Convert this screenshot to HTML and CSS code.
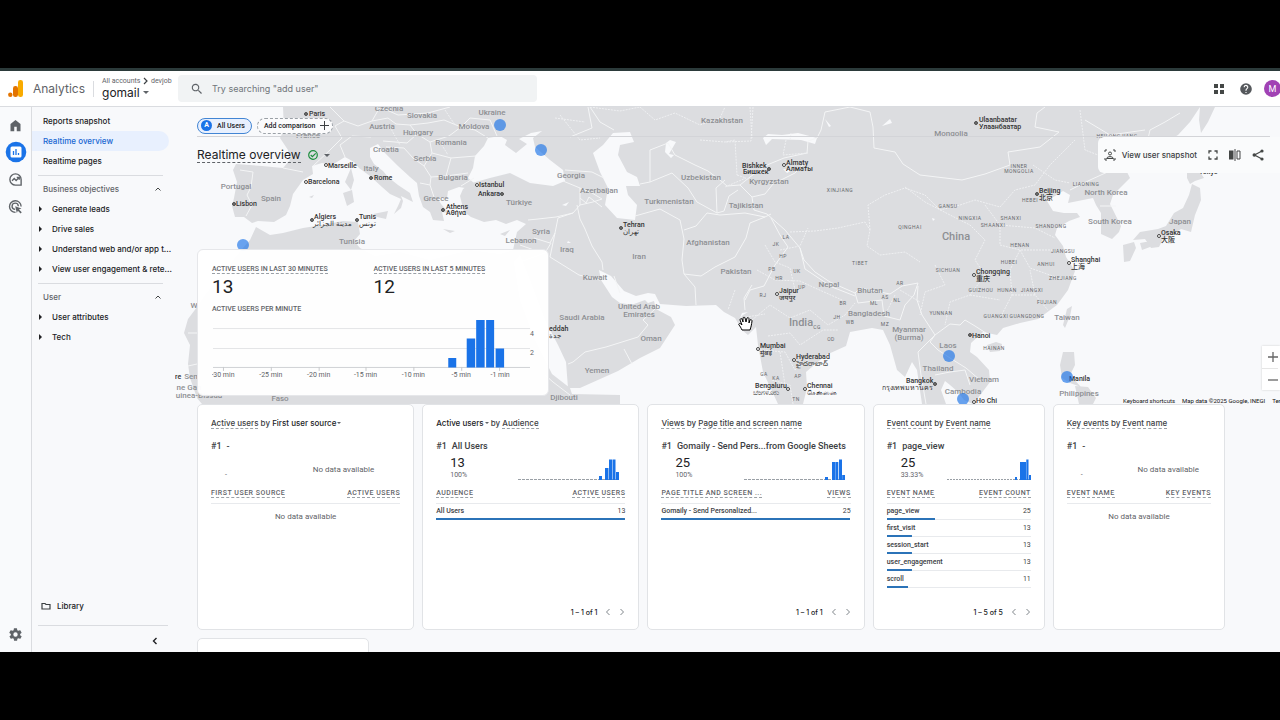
FILE: index.html
```html
<!DOCTYPE html>
<html lang="en">
<head>
<meta charset="utf-8">
<title>Analytics | Realtime overview</title>
<link rel="stylesheet" href="styles.css">
</head>
<body>
<div class="app">
  <header class="topbar">
    <svg class="logo" viewBox="0 0 16 18" width="16" height="18"><rect x="10" y="0" width="5" height="17" rx="2.3" fill="#f9ab00"/><rect x="5" y="6" width="5" height="11" rx="2.3" fill="#e37400"/><circle cx="2.3" cy="14.8" r="2.2" fill="#e37400"/></svg>
    <span class="brand">Analytics</span>
    <div class="account">
      <span class="crumbs">All accounts <svg viewBox="0 0 5 8" width="5" height="8"><path d="M1 1l3 3-3 3" fill="none" stroke="#3c4043" stroke-width="1.2"/></svg> devjob</span>
      <button class="property">gomail <i class="caret"></i></button>
    </div>
    <label class="search">
      <svg viewBox="0 0 24 24" width="14" height="14"><path fill="#5f6368" d="M15.5 14h-.8l-.3-.3A6.500 6.500 0 1 0 13.700 14.400l.3.300v.8l5 5 1.500-1.500zm-6 0A4.500 4.500 0 1 1 9.500 5a4.500 4.500 0 0 1 0 9z"/></svg>
      <input type="search" aria-label="Search" placeholder="Try searching &quot;add user&quot;">
    </label>
    <div class="tools">
      <button class="apps" aria-label="Apps"><svg viewBox="0 0 12 12" width="12" height="12" fill="#444746"><rect x="1" y="1" width="4" height="4"/><rect x="7" y="1" width="4" height="4"/><rect x="1" y="7" width="4" height="4"/><rect x="7" y="7" width="4" height="4"/></svg></button>
      <button aria-label="Help"><svg viewBox="0 0 24 24" width="14" height="14"><path fill="#55585c" d="M12 2a10 10 0 1 0 0 20 10 10 0 0 0 0-20zm1 17h-2v-2h2zm2.100-7.700l-.9.900c-.8.700-1.200 1.300-1.200 2.800h-2v-.5c0-1.100.4-2.100 1.200-2.800l1.200-1.300A2 2 0 1 0 10 9H8a4 4 0 1 1 7.100 2.300z"/></svg></button>
      <button class="avatar" aria-label="Account">M</button>
    </div>
  </header>

  <div class="body">
    <div class="rail">
      <a href="#" aria-label="Home"><svg viewBox="0 0 24 24" width="15" height="15"><path fill="#5f6368" d="M4 21V9.500L12 3l8 6.500V21h-6v-7h-4v7z"/></svg></a>
      <a href="#" aria-label="Reports"><svg viewBox="0 0 22 22" width="22" height="22"><circle cx="11" cy="11" r="10.300" fill="#1a73e8"/><rect x="5.500" y="5.500" width="11" height="11" rx="1.500" fill="#fff"/><path d="M8.500 10v4M11 8v6M13.500 12v2" stroke="#1a73e8" stroke-width="1.300"/></svg></a>
      <a href="#" aria-label="Explore"><svg viewBox="0 0 24 24" width="15" height="15" fill="none" stroke="#5f6368" stroke-width="2.200"><path d="M21 12a9 9 0 1 0-9 9h9z"/><path d="M6.500 14l3.500-3.500 3 3 5-5M14 8.500h4v4"/></svg></a>
      <a href="#" aria-label="Advertising"><svg viewBox="0 0 24 24" width="15" height="15" fill="none" stroke="#5f6368" stroke-width="2.200"><path d="M21 12a9.300 9.300 0 1 0-9 9.300"/><path d="M16.500 11.500a5 5 0 1 0-5 5"/><path d="M11.500 11.500l10 3.500-4 1.800 4.500 4.500-1.800 1.800-4.500-4.500-1.600 3.600z" fill="#5f6368" stroke="none"/></svg></a>
      <a href="#" class="gear" aria-label="Admin"><svg viewBox="0 0 24 24" width="15" height="15"><path fill="#5f6368" d="M19.400 13a7.500 7.500 0 0 0 0-2l2.100-1.600c.2-.2.200-.4.100-.6l-2-3.500c-.1-.2-.4-.3-.6-.2l-2.500 1a7 7 0 0 0-1.700-1l-.4-2.600a.5.5 0 0 0-.5-.5h-4c-.2 0-.4.200-.5.400l-.4 2.700a7 7 0 0 0-1.700 1l-2.500-1c-.2-.1-.5 0-.6.200l-2 3.500c-.1.200 0 .5.100.6L4.600 11a7.500 7.500 0 0 0 0 2l-2.100 1.600c-.2.200-.2.400-.1.600l2 3.500c.1.200.4.300.6.200l2.500-1a7 7 0 0 0 1.700 1l.4 2.600c.1.300.3.500.5.500h4c.2 0 .4-.2.500-.4l.4-2.700a7 7 0 0 0 1.700-1l2.500 1c.2.100.5 0 .6-.2l2-3.500c.1-.2.100-.5-.1-.6zM12 15.500a3.500 3.500 0 1 1 0-7 3.500 3.500 0 0 1 0 7z"/></svg></a>
    </div>

    <nav class="nav">
      <a href="#" class="item">Reports snapshot</a>
      <a href="#" class="item current">Realtime overview</a>
      <a href="#" class="item">Realtime pages</a>
      <hr>
      <button class="group">Business objectives <svg viewBox="0 0 8 6" width="8" height="6"><path d="M1.500 4.500L4 2l2.500 2.500" fill="none" stroke="#444746"/></svg></button>
      <a href="#" class="item sub">Generate leads</a>
      <a href="#" class="item sub">Drive sales</a>
      <a href="#" class="item sub">Understand web and/or app t...</a>
      <a href="#" class="item sub">View user engagement &amp; rete...</a>
      <hr>
      <button class="group">User <svg viewBox="0 0 8 6" width="8" height="6"><path d="M1.500 4.500L4 2l2.500 2.500" fill="none" stroke="#444746"/></svg></button>
      <a href="#" class="item sub">User attributes</a>
      <a href="#" class="item sub">Tech</a>
      <a href="#" class="library"><svg viewBox="0 0 10 8" width="10" height="8"><path d="M1 1.500h3l1 1h4v4.500H1z" fill="none" stroke="#3c4043" stroke-width="1.200"/></svg>Library</a>
      <hr class="wide">
      <button class="collapse" aria-label="Collapse navigation"><svg viewBox="0 0 8 8" width="8" height="8"><path d="M5.500 1L2.500 4l3 3" fill="none" stroke="#202124" stroke-width="1.400"/></svg></button>
    </nav>

    <main class="main">
      <section class="hero">
        <svg class="map" viewBox="175 107 1105 297" preserveAspectRatio="xMinYMin slice" role="img" aria-label="Map of active users">
          <g class="land">
            <path d="M283 107L284 130 280 138 288 150 290 160 283 168 262 166 236 164 233 170 237 182 234 198 232 206 235 217 244 217 252 223 258 221 274 222 286 215 290 206 293 194 303 180 313 174 312 166 322 163 332 165 345 157 354 162 359 168 370 176 382 187 390 194 401 199 398 206 394 214 401 208 403 201 401 196 413 202 410 193 398 185 388 177 383 171 374 164 370 157 370 148 378 144 384 152 398 166 410 177 417 183 419 196 423 207 430 212 433 220 444 221 442 212 449 213 441 204 437 197 447 198 448 191 459 187 471 189 474 183 468 178 473 168 475 156 484 146 488 138 500 136 507 140 505 145 516 153 527 144 519 139 531 133 542 131 533 138 535 147 550 160 563 170 565 181 553 186 530 183 510 173 490 178 472 183 463 189 460 196 464 212 471 217 484 222 496 220 506 224 517 220 526 224 517 232 513 250 500 254 470 250 430 260 400 252 375 256 360 248 354 241 360 234 358 222 343 221 322 225 303 228 283 233 270 235 256 227 250 240 243 248 225 270 205 295 197 307 188 319 184 333 190 345 188 364 190 378 197 398 202 404H620V395L572 394 570 388 552 374 535 340 520 300 514 262 520 255 528 275 545 320 558 345 566 362 568 388 580 388 618 371 640 358 660 348 675 325 671 317 656 309 654 301 648 303 645 300 634 304 627 304 620 303 612 297 601 280 599 270 611 276 624 291 636 296 648 293 655 294 660 304 686 306 716 305 724 312 735 318 742 330 748 335 756 327 758 345 763 372 772 391 778 404H803L807 388 806 372 826 355 846 346 850 332 872 328 883 330 890 345 897 370 905 377 912 362 917 370 922 404H946L941 390 945 381 950 385 958 392 964 400 973 404 978 398 990 382 989 370 977 357 970 352 971 343 983 332 997 335 1003 328 1020 323 1038 319 1057 305 1068 290 1075 271 1066 257 1063 246 1055 235 1057 228 1069 221 1080 217 1077 213 1064 213 1053 211 1047 201 1055 196 1063 191 1070 195 1068 203 1093 198 1096 205 1101 213 1101 234 1112 239 1119 232 1121 226 1114 212 1110 204 1113 195 1130 178 1127 172 1138 155 1160 145 1178 135 1190 122 1200 107Z"/>
            <path d="M1200 107H1215L1208 122 1201 133 1199 120ZM1187 172L1200 172 1204 178 1195 181 1190 184 1187 178ZM1192 184L1200 188 1201 200 1195 215 1191 232 1181 229 1173 234 1163 239 1159 247 1151 248 1145 239 1133 240 1140 232 1158 229 1166 226 1174 213 1183 208 1189 195ZM1123 245L1134 242 1136 248 1130 261 1124 262ZM1140 243L1151 241 1150 247 1142 250ZM1063 325L1067 309 1072 306 1070 316 1065 328ZM987 345L996 342 1002 344 1000 351 990 352ZM1063 352L1074 352 1075 365 1070 375 1081 387 1070 383 1062 378 1060 365ZM1075 386L1088 387 1096 398 1093 404H1079ZM345 182L351 168 354 180 351 190ZM343 193L352 190 354 202 347 206ZM373 214L388 211 386 219 377 217ZM443 229L455 231 450 233ZM500 234L510 230 505 236ZM309 197L314 195 312 198Z"/>
          </g>
          <g class="water">
            <path d="M613 133L630 132 634 142 620 145 618 155 627 172 637 177 640 186 626 186 628 195 637 205 635 220 617 218 605 205 608 188 600 172 593 153 603 145ZM666 143L670 140 676 142 669 154 674 155 671 158 665 152ZM763 138L768 134 782 135 798 133 817 138 815 144 801 140 772 139 766 145ZM783 169L792 170 787 173ZM825 119L831 126 829 127ZM562 205L569 202 566 206ZM568 241L571 243 567 243ZM882 126L890 119 892 123ZM932 218L935 219 933 221Z"/>
            <path d="M742 313L748 312 743 315 740 318Z"/>
          </g>
          <g class="borders">
            <path d="M283 168L303 172M240 170L253 172 251 187 247 195 252 205 246 216M313 166L330 150 342 138 335 126 344 121 330 107M345 157L340 145 352 136 371 137M344 121L358 126 372 121 380 107M372 121L388 118 396 124 410 125 417 134 407 143 383 141M410 125L428 123 444 120 461 127 449 136 430 142 417 134M380 107L398 115 428 113 450 107M461 127L475 130 488 138M461 127L470 118 490 120 497 136M430 142L432 153 451 158 476 156M432 153L424 166 413 158 404 148 386 147M424 166L431 177 446 176 451 158M431 177L430 185 420 183M446 176L468 173M430 185L434 197M461 186L474 178M563 181L580 188 580 205 573 213 556 217 538 219 528 220M565 170L592 172 604 178M580 188L592 193 602 199 593 202 580 205M580 198L586 203 589 197 602 207M573 213L558 218 555 233 550 243 534 238M555 233L550 257 579 275 600 280M534 250L520 245M577 205L580 219 585 229 592 246 602 262 603 270M551 243L545 253 520 262M614 276L620 293M655 309L643 320 648 325 638 337 606 347 585 352 573 362 568 364M624 349L632 364"/>
            <path d="M635 216L660 209 680 220 684 239 682 260 684 274 695 287 696 305M684 230L696 226 707 213 720 215 745 213 765 217 771 214M684 274L701 276 715 267 735 257 746 238 750 223 765 217M590 107L600 122 614 130M650 182L650 150 668 143 675 155 695 165 708 171 720 180 727 186 740 185M640 184L650 182 672 173 688 188 697 202 717 213 724 211 729 196 738 190M717 213L716 188 725 180M740 185L750 177 767 165 784 158 807 153 808 141 817 138 821 130 825 112 850 107M740 185L752 197 765 194 773 184 795 173 804 164M752 197L754 210 767 214 785 230 800 248 804 260 815 272 830 282 855 293 860 288 890 294 902 286 918 283 914 295 905 305 900 320 884 316 882 300 858 303 855 293M745 300L750 290 764 286 775 265 788 247 780 235 771 218M800 248L805 269 832 287 855 296M850 107L870 112 873 127 874 148 895 152 903 164 920 175 962 180 985 174 1010 165 1008 152 1040 147 1059 132 1035 127 1037 113 1045 107M745 310L744 298 752 285M918 286L917 300 922 315 935 335 950 324 960 325 965 320 975 326 989 335M935 335L930 342 938 350 950 358 966 368 980 380M935 335L918 352 921 375 926 404M935 375L950 372 965 370 970 385M1100 206L1116 206M1070 190L1090 180 1112 170M1145 152L1150 130 1165 122 1180 113M1085 120L1110 135 1145 130M588 107L592 128 570 137M188 333L197 333M188 366L197 364M545 375L553 382 570 395"/>
          </g>
          <g class="borders dotted">
            <path d="M590 107L620 111 640 107M700 140L725 142 735 140 737 175M753 107L751 141 725 142M555 118L585 122M750 107L752 138M786 140L783 155 808 153M790 140L791 133M737 175L746 178 725 187M870 230L868 205 885 195 905 188 925 195 940 210 960 205 975 200 1000 207M790 232L815 231 838 228 865 222 870 230 867 246 880 255 905 252 920 262M765 245L775 262 790 268 795 290M780 250L800 246 808 228M757 270L775 280 800 281 815 288 842 300M752 320L770 305 790 318 810 310 828 325 845 315 855 303M768 336L790 333 800 345 823 330 838 330M760 350L785 352 795 370 810 358M772 380L790 385 793 404M780 352L785 385M905 187L925 202 950 215 970 225 985 240 975 260 985 275 1010 270 1020 250 1055 250M985 205L1000 225 1000 245 1020 250M1000 225L1035 228 1055 238M1020 250L1030 268 1050 275 1065 280M1010 270L1012 295 1000 318M1012 295L1035 295 1048 310M1035 295L1030 270M985 275L970 295 950 302 945 325M970 295L1000 300M935 265L945 285 925 292 920 315M1033 165L1055 180 1070 183M1080 110L1085 150 1098 155M1000 207L1015 190 1035 185 1050 165 1075 140M440 142L448 155M445 110L455 125M390 127L400 145M560 115L580 140 600 138M640 107L655 120 675 113 700 125 720 118 725 107M735 290L728 310M740 318L765 314M895 295L885 315M900 290L920 302"/>
          </g>
          <g class="country">
            <text x="389" y="111">Czechia</text><text x="422" y="118">Slovakia</text><text x="492" y="115">Ukraine</text><text x="382" y="129">Austria</text><text x="418" y="135">Hungary</text><text x="474" y="129">Moldova</text><text x="451" y="145">Romania</text><text x="308" y="138">France</text><text x="386" y="152">Croatia</text><text x="425" y="161">Serbia</text><text x="371" y="171">Italy</text><text x="453" y="180">Bulgaria</text><text x="236" y="189">Portugal</text><text x="271" y="201">Spain</text><text x="436" y="201">Greece</text><text x="519" y="205">Türkiye</text><text x="352" y="244">Tunisia</text><text x="541" y="234">Syria</text><text x="521" y="243">Lebanon</text><text x="567" y="252">Iraq</text><text x="571" y="178">Georgia</text><text x="599" y="193">Azerbaijan</text><text x="639" y="259">Iran</text><text x="595" y="280">Kuwait</text><text x="582" y="320">Saudi Arabia</text><text x="639" y="309">United Arab</text><text x="639" y="317">Emirates</text><text x="651" y="341">Oman</text><text x="597" y="373">Yemen</text><text x="564" y="400">Djibouti</text><text x="722" y="123">Kazakhstan</text><text x="701" y="180">Uzbekistan</text><text x="669" y="204">Turkmenistan</text><text x="769" y="184">Kyrgyzstan</text><text x="746" y="208">Tajikistan</text><text x="708" y="245">Afghanistan</text><text x="736" y="274">Pakistan</text><text x="829" y="287">Nepal</text><text x="870" y="293">Bhutan</text><text x="869" y="316">Bangladesh</text><text x="909" y="332">Myanmar</text><text x="909" y="340">(Burma)</text><text x="951" y="136">Mongolia</text><text x="1106" y="195">North Korea</text><text x="1110" y="224">South Korea</text><text x="1180" y="224">Japan</text><text x="1067" y="320">Taiwan</text><text x="948" y="348">Laos</text><text x="938" y="371">Thailand</text><text x="984" y="382">Vietnam</text><text x="963" y="394">Cambodia</text><text x="1079" y="396">Philippines</text><text x="191" y="379">Sen</text><text x="189" y="390">ne Gan</text><text x="199" y="398">uinea-Bissau</text><text x="280" y="401">Faso</text><text x="194" y="308">W</text>
          </g>
          <g class="country large"><text x="801" y="326">India</text><text x="956" y="240">China</text></g>
          <g class="region">
            <text x="840" y="192">XINJIANG</text><text x="910" y="229">QINGHAI</text><text x="860" y="265">TIBET</text><text x="1019" y="168">INNER</text><text x="1019" y="173">MONGOLIA</text><text x="948" y="208">GANSU</text><text x="970" y="220">NINGXIA</text><text x="1011" y="220">SHANXI</text><text x="993" y="227">SHAANXI</text><text x="1030" y="202">HEBEI</text><text x="1051" y="228">SHANDONG</text><text x="1086" y="186">LIAONING</text><text x="1020" y="247">HENAN</text><text x="1063" y="253">JIANGSU</text><text x="1009" y="264">HUBEI</text><text x="1046" y="266">ANHUI</text><text x="948" y="272">SICHUAN</text><text x="1063" y="280">ZHEJIANG</text><text x="981" y="292">GUIZHOU</text><text x="1007" y="292">HUNAN</text><text x="1032" y="292">JIANGXI</text><text x="1047" y="304">FUJIAN</text><text x="941" y="315">YUNNAN</text><text x="996" y="318">GUANGXI</text><text x="1027" y="318">GUANGDONG</text><text x="994" y="350">HAINAN</text><text x="1117" y="138">HEILONGJIANG</text><text x="786" y="239">LA</text><text x="776" y="246">JK</text><text x="783" y="258">HP</text><text x="772" y="271">PB</text><text x="797" y="273">UK</text><text x="779" y="280">HR</text><text x="802" y="289">UP</text><text x="763" y="297">RJ</text><text x="843" y="305">BR</text><text x="874" y="305">ML</text><text x="885" y="299">AS</text><text x="897" y="302">NL</text><text x="900" y="285">AR</text><text x="837" y="319">JH</text><text x="850" y="324">WB</text><text x="885" y="326">MZ</text><text x="817" y="329">CG</text><text x="831" y="341">OD</text><text x="764" y="376">GA</text><text x="776" y="380">KA</text><text x="798" y="378">AP</text><text x="796" y="401">TN</text>
          </g>
          <g class="city">
            <text x="309" y="116">Paris</text><text x="328" y="168">Marseille</text><text x="308" y="184">Barcelona</text><text x="374" y="180">Rome</text><text x="236" y="206">Lisbon</text><text x="314" y="219">Algiers</text><text x="313" y="226">مدينة الجزائر</text><text x="359" y="219">Tunis</text><text x="359" y="226">تونس</text><text x="479" y="187">Istanbul</text><text x="478" y="196">Ankara</text><text x="446" y="209">Athens</text><text x="446" y="215">Αθήνα</text><text x="623" y="227">Tehran</text><text x="623" y="234">تهران</text><text x="742" y="168">Bishkek</text><text x="743" y="174">Бишкек</text><text x="786" y="165">Almaty</text><text x="786" y="171">Алматы</text><text x="979" y="122">Ulaanbaatar</text><text x="979" y="129">Улаанбаатар</text><text x="1039" y="193">Beijing</text><text x="1039" y="200">北京</text><text x="1161" y="235">Osaka</text><text x="1161" y="242">大阪</text><text x="1071" y="262">Shanghai</text><text x="1071" y="269">上海</text><text x="976" y="274">Chongqing</text><text x="976" y="281">重庆</text><text x="779" y="293">Jaipur</text><text x="779" y="300">जयपुर</text><text x="760" y="348">Mumbai</text><text x="760" y="355">मुंबई</text><text x="796" y="359">Hyderabad</text><text x="796" y="366">హైదరాబాద్</text><text x="755" y="388">Bengaluru</text><text x="753" y="395">ಬೆಂಗಳೂರು</text><text x="807" y="388">Chennai</text><text x="807" y="395">சென்னை</text><text x="972" y="338">Hanoi</text><text x="906" y="383">Bangkok</text><text x="882" y="390">กรุงเทพมหานคร</text><text x="1069" y="381">Manila</text><text x="976" y="403">Ho Chi</text><text x="549" y="331">eddah</text><text x="549" y="338">جدة</text><text x="1199" y="174">Tokyo</text><text x="175" y="379">re</text>
          </g>
          <g class="stops"><circle cx="306" cy="114" r="1.500"/><circle cx="326" cy="165" r="1.500"/><circle cx="306" cy="182" r="1.500"/><circle cx="371" cy="178" r="1.500"/><circle cx="234" cy="204" r="1.500"/><circle cx="312" cy="220" r="1.500"/><circle cx="357" cy="220" r="1.500"/><circle cx="477" cy="185" r="1.500"/><circle cx="502" cy="194" r="1.500"/><circle cx="443" cy="210" r="1.500"/><circle cx="621" cy="228" r="1.500"/><circle cx="769" cy="169" r="1.500"/><circle cx="784" cy="165" r="1.500"/><circle cx="976" cy="123" r="1.500"/><circle cx="1037" cy="194" r="1.500"/><circle cx="1159" cy="236" r="1.500"/><circle cx="1069" cy="263" r="1.500"/><circle cx="974" cy="275" r="1.500"/><circle cx="777" cy="294" r="1.500"/><circle cx="758" cy="349" r="1.500"/><circle cx="794" cy="360" r="1.500"/><circle cx="788" cy="389" r="1.500"/><circle cx="805" cy="389" r="1.500"/><circle cx="970" cy="335" r="1.500"/><circle cx="935" cy="384" r="1.500"/><circle cx="974" cy="402" r="1.500"/></g>
          <g class="capitals"><circle cx="306" cy="114" r="1"/><circle cx="371" cy="178" r="1"/><circle cx="234" cy="204" r="1"/><circle cx="312" cy="220" r="1"/><circle cx="357" cy="220" r="1"/><circle cx="502" cy="194" r="1"/><circle cx="443" cy="210" r="1"/><circle cx="621" cy="228" r="1"/><circle cx="769" cy="169" r="1"/><circle cx="976" cy="123" r="1"/><circle cx="1037" cy="194" r="1"/><circle cx="970" cy="335" r="1"/><circle cx="935" cy="384" r="1"/></g>
          <g class="users"><circle cx="500" cy="125" r="6"/><circle cx="541" cy="150" r="6"/><circle cx="243" cy="245" r="6"/><circle cx="949" cy="356" r="6"/><circle cx="963" cy="399" r="6"/><circle cx="1067" cy="377" r="6"/></g>
          <path class="hand" d="M742 330c-1-2-2-4-3-5s1-2 2-1l1 1-2-5c0-1 1-2 2-1l1 3 0-4c0-1 2-1 2 0l1 4 1-4c1-1 2 0 2 1l0 4 1-3c1-1 2 0 2 1-.5 4-1 6-2 9z"/>
        </svg>

        <div class="overlay">
          <div class="chips">
            <button class="chip active"><b>A</b>All Users</button>
            <button class="chip add">Add comparison <svg viewBox="0 0 9 9" width="9" height="9"><path d="M4.500 0v9M0 4.500h9" stroke="#3c4043"/></svg></button>
          </div>
          <div class="titlebar">
            <h1>Realtime overview</h1>
            <svg viewBox="0 0 10 10" width="10" height="10" fill="none" stroke="#1e8e3e" stroke-width="1.200"><circle cx="5" cy="5" r="4.300"/><path d="M2.700 5l1.700 1.700 3.300-3.400"/></svg>
            <i class="caret"></i>
            <div class="actions">
              <button><svg viewBox="0 0 12 12" width="12" height="12" fill="none" stroke="#444746"><path d="M1 3V1h2M9 1h2v2M11 9v2H9M3 11H1V9"/><circle cx="6" cy="4.500" r="1.500"/><path d="M2.500 9.500C3.500 7 8.500 7 9.500 9.500z"/></svg>View user snapshot</button>
              <button aria-label="Full screen"><svg viewBox="0 0 10 10" width="10" height="10" fill="none" stroke="#444746" stroke-width="1.300"><path d="M1 3.500V1h2.500M6.500 1H9v2.500M9 6.500V9H6.500M3.500 9H1V6.500"/></svg></button>
              <button aria-label="Compare"><svg viewBox="0 0 12 12" width="12" height="12"><path d="M0 1.500h4.500v9H0zM5.500 0h1v12h-1z" fill="#444746"/><path d="M8 2h3v8H8z" fill="none" stroke="#444746"/></svg></button>
              <button aria-label="Share"><svg viewBox="0 0 12 12" width="12" height="12"><path d="M10 2L2.500 6l7.500 4" fill="none" stroke="#444746" stroke-width="1.200"/><g fill="#444746"><circle cx="10" cy="2" r="1.600"/><circle cx="2.300" cy="6" r="1.800"/><circle cx="10" cy="10" r="1.600"/></g></svg></button>
            </div>
          </div>
          <section class="summary">
            <dl>
              <div><dt><span class="hint">ACTIVE USERS IN LAST 30 MINUTES</span></dt><dd>13</dd></div>
              <div><dt><span class="hint">ACTIVE USERS IN LAST 5 MINUTES</span></dt><dd>12</dd></div>
            </dl>
            <h2>ACTIVE USERS PER MINUTE</h2>
            <svg class="chart" viewBox="211 317 324 64" role="img" aria-label="Active users per minute">
              <path d="M212 328.500H530M212 348.500H530" stroke="#e4e5e7"/><path d="M212 367.500H530" stroke="#d0d2d5"/>
              <path d="M222.500 367v4M270.500 367v4M318.500 367v4M365.500 367v4M413.500 367v4M461.500 367v4M499.500 367v4" stroke="#c8cacd"/>
              <path d="M448 358h8v9.500h-8zM466.500 338.500h8.500v29h-8.500zM476 320h8.500v47.500H476zM486 320h8v47.500h-8zM495.500 348.500h8.500v19h-8.500z" fill="#1a73e8"/>
              <g><text x="222" y="377">-30 min</text><text x="270" y="377">-25 min</text><text x="318" y="377">-20 min</text><text x="365" y="377">-15 min</text><text x="413" y="377">-10 min</text><text x="461" y="377">-5 min</text><text x="500" y="377">-1 min</text><text x="532" y="336">4</text><text x="532" y="355">2</text></g>
            </svg>
          </section>
        </div>
        <div class="zoom"><button aria-label="Zoom in"><svg viewBox="0 0 10 10" width="10" height="10"><path d="M5 0v10M0 5h10" stroke="#666" stroke-width="1.300"/></svg></button><button aria-label="Zoom out"><svg viewBox="0 0 10 10" width="10" height="10"><path d="M0 5h10" stroke="#666" stroke-width="1.300"/></svg></button></div>
        <div class="credit"><span>Keyboard shortcuts</span><span>Map data ©2025 Google, INEGI</span><span>Terms</span></div>
      </section>

      <section class="cards">
        <article class="card">
          <h3><span class="hint">Active users</span> by <button>First user source<i class="caret"></i></button></h3>
          <p class="top"><span>#1</span>-</p>
          <div class="stat"><div><strong></strong><small>-</small></div><em>No data available</em></div>
          <table><thead><tr><th><span class="hint">FIRST USER SOURCE</span></th><th><span class="hint">ACTIVE USERS</span></th></tr></thead><tbody><tr class="empty"><td colspan="2">No data available</td></tr></tbody></table>
        </article>
        <article class="card">
          <h3><button>Active users<i class="caret"></i></button> by <span class="hint">Audience</span></h3>
          <p class="top"><span>#1</span>All Users</p>
          <div class="stat"><div><strong>13</strong><small>100%</small></div><svg viewBox="0 0 101 21" width="101" height="21"><path d="M0 20.500H101" stroke="#9aa0a6" stroke-dasharray="3 1"/><path d="M81 17h3v4h-3zM87 9h3.500v12H87zM91 0.500h3v20.500h-3zM94.500 0.500h3v20.500h-3zM98 13h3v8h-3z" fill="#1a73e8"/></svg></div>
          <table><thead><tr><th><span class="hint">AUDIENCE</span></th><th><span class="hint">ACTIVE USERS</span></th></tr></thead><tbody><tr style="--share:100%"><td>All Users</td><td>13</td></tr></tbody></table>
          <div class="pager">1 – 1 of 1 <button aria-label="Previous"><svg viewBox="0 0 6 8" width="6" height="8"><path d="M4.500 1l-3 3 3 3" fill="none" stroke="#80868b"/></svg></button><button aria-label="Next"><svg viewBox="0 0 6 8" width="6" height="8"><path d="M1.500 1l3 3-3 3" fill="none" stroke="#80868b"/></svg></button></div>
        </article>
        <article class="card">
          <h3><span class="hint">Views</span> by <span class="hint">Page title and screen name</span></h3>
          <p class="top"><span>#1</span>Gomaily - Send Pers...from Google Sheets</p>
          <div class="stat"><div><strong>25</strong><small>100%</small></div><svg viewBox="0 0 101 21" width="101" height="21"><path d="M0 20.500H101" stroke="#9aa0a6" stroke-dasharray="3 1"/><path d="M81 18h3v3h-3zM88 3h3v18h-3zM91.300 3h3v18h-3zM95 0.500h3v20.500h-3zM98.200 16h2.800v5h-2.800z" fill="#1a73e8"/></svg></div>
          <table><thead><tr><th><span class="hint">PAGE TITLE AND SCREEN ...</span></th><th><span class="hint">VIEWS</span></th></tr></thead><tbody><tr style="--share:100%"><td>Gomaily - Send Personalized...</td><td>25</td></tr></tbody></table>
          <div class="pager">1 – 1 of 1 <button aria-label="Previous"><svg viewBox="0 0 6 8" width="6" height="8"><path d="M4.500 1l-3 3 3 3" fill="none" stroke="#80868b"/></svg></button><button aria-label="Next"><svg viewBox="0 0 6 8" width="6" height="8"><path d="M1.500 1l3 3-3 3" fill="none" stroke="#80868b"/></svg></button></div>
        </article>
        <article class="card narrow">
          <h3><span class="hint">Event count</span> by <span class="hint">Event name</span></h3>
          <p class="top"><span>#1</span>page_view</p>
          <div class="stat"><div><strong>25</strong><small>33.33%</small></div><svg viewBox="0 0 84 21" width="84" height="21"><path d="M0 20.500H84" stroke="#9aa0a6" stroke-dasharray="2 1"/><path d="M68 18h2v3h-2zM73 3h6v18h-6zM79.300 0.500h2.200v20.500h-2.200zM82 16h2v5h-2z" fill="#1a73e8"/></svg></div>
          <table><thead><tr><th><span class="hint">EVENT NAME</span></th><th><span class="hint">EVENT COUNT</span></th></tr></thead><tbody>
            <tr style="--share:33.330%"><td>page_view</td><td>25</td></tr>
            <tr style="--share:17.330%"><td>first_visit</td><td>13</td></tr>
            <tr style="--share:17.330%"><td>session_start</td><td>13</td></tr>
            <tr style="--share:17.330%"><td>user_engagement</td><td>13</td></tr>
            <tr style="--share:14.670%"><td>scroll</td><td>11</td></tr></tbody></table>
          <div class="pager">1 – 5 of 5 <button aria-label="Previous"><svg viewBox="0 0 6 8" width="6" height="8"><path d="M4.500 1l-3 3 3 3" fill="none" stroke="#80868b"/></svg></button><button aria-label="Next"><svg viewBox="0 0 6 8" width="6" height="8"><path d="M1.500 1l3 3-3 3" fill="none" stroke="#80868b"/></svg></button></div>
        </article>
        <article class="card narrow">
          <h3><span class="hint">Key events</span> by <span class="hint">Event name</span></h3>
          <p class="top"><span>#1</span>-</p>
          <div class="stat"><div><strong></strong><small>-</small></div><em>No data available</em></div>
          <table><thead><tr><th><span class="hint">EVENT NAME</span></th><th><span class="hint">KEY EVENTS</span></th></tr></thead><tbody><tr class="empty"><td colspan="2">No data available</td></tr></tbody></table>
        </article>
        <article class="card next"></article>
      </section>
    </main>
  </div>
</div>
</body>
</html>
```

FILE: styles.css
```css
* { box-sizing: border-box; }
body { margin: 0; height: 100vh; padding: 68px 0; background: #000; font-family: Roboto, "Noto Sans", "Noto Sans CJK SC", sans-serif; font-size: 8px; color: #202124; overflow: hidden; }
button { border: 0; padding: 0; background: none; font: inherit; color: inherit; display: inline-flex; align-items: center; }
a { color: inherit; text-decoration: none; }
h1, h2, h3, p, dl, dd { margin: 0; font-weight: 400; }
svg { flex: none; }
.caret { display: inline-block; border: 3px solid transparent; border-top-color: #5f6368; border-bottom: 0; }

.app { height: 100%; display: flex; flex-direction: column; overflow: hidden; background: #f8f9fb; border-top: 3px solid #2b3a3a; }

.topbar { display: flex; align-items: center; height: 36px; flex: none; background: #fff; border-bottom: 1px solid #dadce0; padding-left: 8px; }
.brand { margin-left: 9px; padding-right: 8px; font-family: Inter, sans-serif; font-size: 12px; line-height: 16px; color: #5f6368; border-right: 1px solid #dadce0; flex: none; }
.account { margin-left: 8px; width: 76px; display: flex; flex-direction: column; align-items: flex-start; }
.crumbs { font-size: 7px; line-height: 8px; color: #5f6368; white-space: nowrap; }
.crumbs svg { vertical-align: -2px; margin: 0 1px; }
.property { font-family: Inter, sans-serif; font-size: 12px; line-height: 16px; gap: 3px; }
.search { display: flex; align-items: center; gap: 8px; width: 359px; height: 27px; padding-left: 12px; background: #f1f3f4; border-radius: 4px; }
.search input { flex: 1; border: 0; outline: 0; background: none; font: 9px Inter, sans-serif; color: #5f6368; padding: 0; }
.search input::placeholder { color: #70757a; }
.tools { margin-left: auto; display: flex; align-items: center; gap: 11px; margin-right: -1px; }
.apps { margin-right: 3px; }
.avatar { width: 17px; height: 17px; border-radius: 50%; justify-content: center; background: #a142b4; color: #fff; font-size: 9px; }

.body { flex: 1; min-height: 0; display: grid; grid-template: minmax(0, 1fr) / 32px 143px minmax(0, 1fr); }
.rail { display: flex; flex-direction: column; align-items: center; gap: 5px; padding: 7px 0; border-right: 1px solid #dadce0; background: #f9fafc; }
.rail a { display: flex; align-items: center; justify-content: center; height: 22px; }
.rail .gear { margin-top: auto; }

.nav { display: flex; flex-direction: column; padding-top: 4px; font-family: Inter, sans-serif; font-size: 8px; font-weight: 500; white-space: nowrap; }
.nav .item { display: flex; flex: none; align-items: center; height: 20px; margin-right: 6px; padding-left: 11px; }
.nav .current { background: #e8f0fe; color: #1967d2; border-radius: 0 10px 10px 0; }
.nav .sub { padding-left: 7px; }
.nav .sub::before { content: ""; border: 3px solid transparent; border-left-color: #202124; border-right: 0; margin-right: 10px; }
.nav hr { width: 125px; margin: 4px 0 3px 6px; border: 0; border-top: 1px solid #dadce0; }
.nav .wide { width: 130px; }
.nav .group { height: 20px; padding: 0 13px 0 11px; justify-content: space-between; color: #5f6368; }
.library { margin-top: auto; padding-left: 9px; height: 30px; display: flex; align-items: center; gap: 6px; }
.collapse { height: 23px; padding-left: 119px; }

.main { min-width: 0; display: flex; flex-direction: column; overflow: hidden; }
.hero { position: relative; display: grid; grid-template: 297px / minmax(0, 1fr); flex: none; overflow: hidden; }
.hero > .map, .hero > .overlay { grid-area: 1 / 1; }
.map { width: 100%; height: 100%; background: #f8f9fb; }
.land { fill: #dcdde0; }
.water { fill: #f8f9fb; }
.borders { fill: none; stroke: #f4f5f6; stroke-width: 1; stroke-linejoin: round; }
.dotted { stroke: #eff0f2; stroke-dasharray: 2 1; }
.country { font-size: 8px; font-weight: 500; fill: #8d8f93; text-anchor: middle; }
.large { font-size: 11px; }
.region { font-size: 5px; fill: #66686c; text-anchor: middle; letter-spacing: 0.500px; }
.city { font-size: 7px; font-weight: 500; fill: #333; }
.stops { fill: #fff; stroke: #444; }
.capitals { fill: #444; }
.users { fill: #1a73e8; opacity: 0.650; }
.hand { fill: #fff; stroke: #000; }

.overlay { position: relative; display: flex; flex-direction: column; padding-left: 22px; }
.chips { display: flex; align-items: center; gap: 5px; height: 30px; padding-top: 8px; border-bottom: 1px solid #d3d4d8; margin-right: 10px; }
.chip { height: 16px; border-radius: 8px; padding: 0 6px 0 3px; font-size: 7px; font-weight: 500; gap: 5px; }
.chip.active { background: #e8f0fe; border: 1px solid #4285d4; }
.chip.active b { width: 11px; height: 11px; line-height: 11px; border-radius: 50%; background: #1a73e8; color: #fff; text-align: center; }
.chip.add { background: #fbfbfc; border: 1px dashed #9aa0a6; padding: 0 3px 0 6px; }
.titlebar { display: flex; align-items: center; height: 36px; }
.titlebar h1 { font-family: Inter, sans-serif; font-size: 12px; line-height: 15px; border-bottom: 1px dashed #5f6368; margin-right: 7px; }
.titlebar > .caret { margin-left: 6px; }
.actions { margin-left: auto; align-self: stretch; display: flex; align-items: center; gap: 11px; padding: 0 16px 0 6px; background: #fafbfc; border-radius: 6px 0 0 6px; font-family: Inter, sans-serif; font-size: 8px; font-weight: 500; color: #3c4043; }
.actions button { gap: 6px; }

.summary { width: 352px; margin-top: auto; margin-bottom: 8px; padding: 14px 13px 14px 14px; background: rgba(255, 255, 255, 0.960); border: 1px solid #e6e7ea; border-radius: 6px; }
.summary dl { display: flex; }
.summary dl div { width: 162px; }
.summary dt, .summary h2 { font-size: 7px; line-height: 10px; font-weight: 500; color: #5f6368; white-space: nowrap; }
.summary dd { font-size: 19px; line-height: 26px; }
.summary h2 { margin-top: 4px; }
.chart { display: block; width: 100%; height: 64px; margin-top: 3px; }
.chart text { font-size: 7px; fill: #5f6368; text-anchor: middle; }
.hint { border-bottom: 1px dashed #9aa0a6; }

.zoom { position: absolute; right: 0; bottom: 14px; width: 18px; background: #fff; box-shadow: 0 0 2px #ccc; }
.zoom button { display: flex; height: 22px; padding-left: 6px; }
.zoom button + button { border-top: 1px solid #e6e6e6; }
.credit { position: absolute; right: -9px; bottom: 0; display: flex; gap: 7px; font-size: 6px; line-height: 7px; color: #111; }

.cards { display: grid; grid-template-columns: 217fr 217fr 217fr 172fr 172fr; gap: 8px; padding: 0 55px 0 22px; }
.card { min-width: 0; height: 226px; display: flex; flex-direction: column; padding: 11px 13px 10px; background: #fff; border: 1px solid #e1e3e6; border-radius: 5px; white-space: nowrap; }
.card h3 { font-family: Inter, sans-serif; font-size: 8px; line-height: 14px; font-weight: 500; color: #3c4043; }
.card h3 button { color: #202124; }
.card h3 .caret { border-width: 2px; border-bottom: 0; margin-left: 1px; }
.top { display: flex; gap: 5px; margin-top: 9px; font-size: 9px; line-height: 14px; font-weight: 500; color: #3c4043; }
.stat { display: flex; justify-content: space-between; align-items: flex-end; height: 27px; padding: 0 6px 0 14px; }
.stat div { display: flex; flex-direction: column; }
.stat strong { font-size: 13px; line-height: 16px; font-weight: 400; }
.stat small { font-size: 7px; line-height: 9px; color: #5f6368; }
.stat em { font-style: normal; font-size: 8px; line-height: 10px; padding: 0 20px 5px 0; color: #5f6368; }
.narrow .stat { padding-right: 0; }
.narrow .stat em { padding-right: 12px; }
table { width: 100%; margin-top: 5px; border-collapse: collapse; }
th { height: 18px; padding: 0; font-size: 7px; line-height: 9px; font-weight: 500; color: #5f6368; text-align: left; border-bottom: 1px solid #e8eaed; letter-spacing: 0.500px; }
td { height: 17px; padding: 0; font-size: 7px; line-height: 9px; font-weight: 500; color: #3c4043; }
th:last-child, td:last-child { text-align: right; }
td:last-child { font-weight: 400; }
tbody tr { background: linear-gradient(#2b73b8, #2b73b8) left bottom / var(--share, 0) 2px no-repeat, linear-gradient(#e8eaed, #e8eaed) left bottom / 100% 1px no-repeat; }
tbody .empty { background: none; }
.empty td:last-child { height: 26px; text-align: center; font-size: 8px; color: #5f6368; }
.pager { margin-top: auto; display: flex; align-items: center; justify-content: flex-end; gap: 8px; height: 14px; font-family: Inter, sans-serif; font-size: 7px; font-weight: 500; }
.card.next { width: 172px; margin-bottom: 0; }
```
